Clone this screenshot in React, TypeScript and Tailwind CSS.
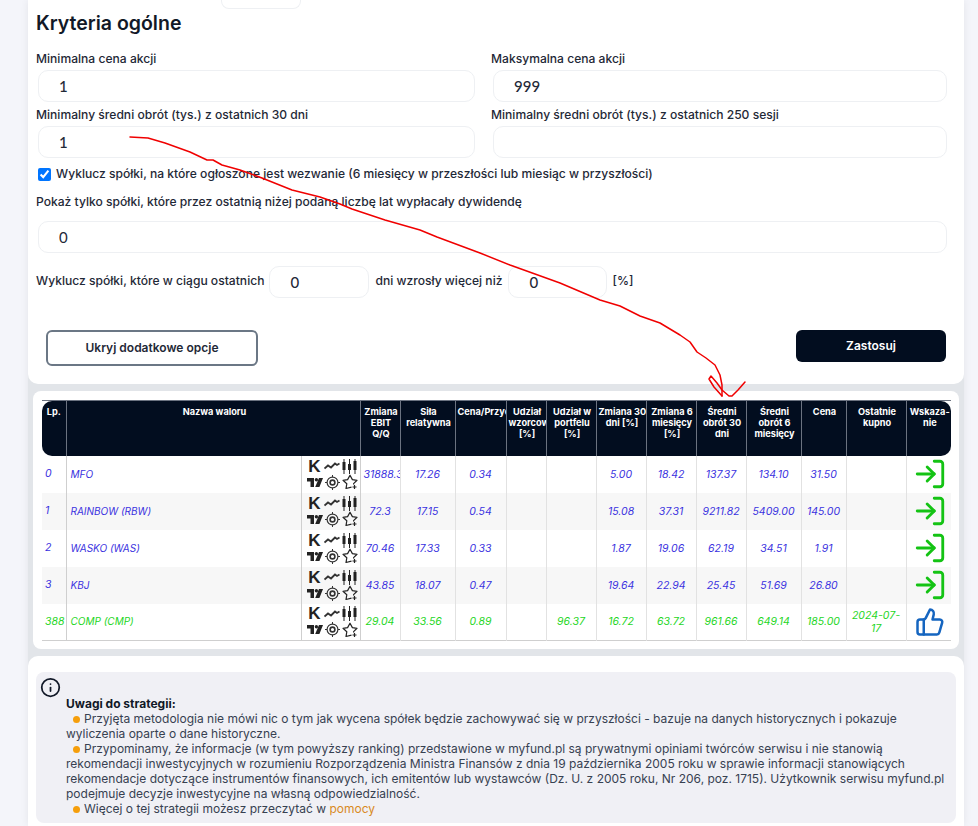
import { Info, LogIn, ThumbsUp } from 'lucide-react';

const headers = [
  'Zmiana EBIT Q/Q',
  'Siła relatywna',
  'Cena/Przychody',
  'Udział wzorcowym [%]',
  'Udział w portfelu [%]',
  'Zmiana\u00a030 dni\u00a0[%]',
  'Zmiana 6 miesięcy [%]',
  'Średni obrót 30 dni',
  'Średni obrót 6 miesięcy',
  'Cena',
  'Ostatnie kupno',
];

const rows = [
  { lp: '0', name: 'MFO', values: ['31888.3', '17.26', '0.34', '', '', '5.00', '18.42', '137.37', '134.10', '31.50', ''] },
  { lp: '1', name: 'RAINBOW (RBW)', values: ['72.3', '17.15', '0.54', '', '', '15.08', '37.31', '9211.82', '5409.00', '145.00', ''] },
  { lp: '2', name: 'WASKO (WAS)', values: ['70.46', '17.33', '0.33', '', '', '1.87', '19.06', '62.19', '34.51', '1.91', ''] },
  { lp: '3', name: 'KBJ', values: ['43.85', '18.07', '0.47', '', '', '19.64', '22.94', '25.45', '51.69', '26.80', ''] },
  { lp: '388', name: 'COMP (CMP)', values: ['29.04', '33.56', '0.89', '', '96.37', '16.72', '63.72', '961.66', '649.14', '185.00', '2024-07-17'], owned: true },
];

function NumberField({ value, className }: { value?: string; className: string }) {
  return (
    <input
      type="text"
      defaultValue={value}
      className={`h-8 rounded-[10px] border border-[#eef0f3] bg-white pl-5 font-['Lato',sans-serif] text-[15px] text-[#1f2937] outline-none ${className}`}
    />
  );
}

function ToolIcons() {
  return (
    <div className="flex flex-col items-center gap-px pl-[3px] not-italic">
      <div className="flex h-[15px] items-center gap-[2px]">
        <span className="w-[14px] text-center font-['Liberation_Sans',sans-serif] text-[17px] leading-none font-bold text-[#222]">K</span>
        <svg width="16" height="10" viewBox="0 0 16 10" fill="none" stroke="#333" strokeWidth="1.8">
          <path d="M0.5 7.5 L4 4.5 L7 6.5 L11 2.5 L13 4 L15.5 2.5" />
        </svg>
        <svg width="15" height="15" viewBox="0 0 15 15" fill="#222">
          <rect x="0.5" y="3" width="3" height="8" />
          <rect x="1.5" y="0" width="1" height="15" />
          <rect x="6" y="5" width="3" height="6" />
          <rect x="7" y="0" width="1" height="15" />
          <rect x="11.5" y="2" width="3" height="9" />
          <rect x="12.5" y="0" width="1" height="15" />
        </svg>
      </div>
      <div className="flex h-[15px] items-center gap-[2px]">
        <svg width="16" height="9" viewBox="0 0 16 9" fill="#222">
          <path d="M0 0h7v9H3.5V3.5H0z" />
          <circle cx="9.4" cy="1.7" r="1.7" />
          <path d="M12 0h4l-3.6 9H8.2z" />
        </svg>
        <svg width="15" height="15" viewBox="0 0 15 15" fill="none" stroke="#333">
          <circle cx="7.5" cy="7.5" r="5.4" strokeWidth="1.2" />
          <circle cx="7.5" cy="7.5" r="2.4" strokeWidth="1.6" />
          <path d="M7.5 0v2M7.5 13v2M0 7.5h2M13 7.5h2" strokeWidth="1" />
        </svg>
        <svg width="16" height="16" viewBox="0 0 16 16" fill="none" stroke="#222" strokeWidth="1.2">
          <path d="M9.5 13.2 L4 14.5 L4.8 9.8 L1 6.3 L5.6 5.6 L8 1.2 L10.4 5.6 L15 6.3 L11.6 9.6 L11.8 10.5" strokeLinejoin="round" />
          <path d="M12.5 11v4M10.5 13h4" strokeWidth="1.2" />
        </svg>
      </div>
    </div>
  );
}

export default function App() {
  return (
    <div className="relative h-[826px] overflow-hidden bg-[#f4f5fa] font-['Inter',sans-serif] text-[#1f2937]">
      <div className="mr-[14px] ml-[28px] bg-[#e2e5e9] shadow-[0_0_8px_rgba(0,0,0,0.07)]">
        {/* Kryteria ogólne */}
        <section className="h-[384px] rounded-b-[10px] bg-white pr-[17px] pl-2">
          <div className="ml-[185px] h-[9px] w-[80px] rounded-b-[8px] border border-t-0 border-[#eef0f3]" />
          <h2 className="mt-[2px] h-[24px] text-[19.5px] leading-[24px] font-semibold text-[#111827]">Kryteria ogólne</h2>
          <div className="mt-[17px] grid grid-cols-[439px_456px] gap-x-4 gap-y-[6px] text-[12.1px] font-medium">
            <div className="flex flex-col gap-[4px]">
              <label className="h-[14px] leading-[14px]">Minimalna cena akcji</label>
              <NumberField value="1" className="ml-0.5 w-[437px]" />
            </div>
            <div className="flex flex-col gap-[4px]">
              <label className="h-[14px] leading-[14px]">Maksymalna cena akcji</label>
              <NumberField value="999" className="ml-0.5 w-[454px]" />
            </div>
            <div className="flex flex-col gap-[4px]">
              <label className="h-[14px] leading-[14px]">Minimalny średni obrót (tys.) z ostatnich 30 dni</label>
              <NumberField value="1" className="ml-0.5 w-[437px]" />
            </div>
            <div className="flex flex-col gap-[4px]">
              <label className="h-[14px] leading-[14px]">Minimalny średni obrót (tys.) z ostatnich 250 sesji</label>
              <NumberField className="ml-0.5 w-[454px]" />
            </div>
          </div>
          <div className="mt-[8px] ml-0.5 flex h-[16px] items-center gap-[5px] text-[12.1px] font-medium">
            <input type="checkbox" defaultChecked className="h-[13px] w-[13px] accent-[#0075ff]" />
            <span>Wyklucz spółki, na które ogłoszone jest wezwanie (6 miesięcy w przeszłości lub miesiąc w przyszłości)</span>
          </div>
          <p className="mt-[13px] h-[14px] text-[12.1px] leading-[14px] font-medium">
            Pokaż tylko spółki, które przez ostatnią niżej podaną liczbę lat wypłacały dywidendę
          </p>
          <NumberField value="0" className="mt-[12px] ml-0.5 block w-[909px]" />
          <div className="mt-[13px] flex h-[32px] items-center text-[12.1px] font-medium">
            <span className="-mt-[2px]">Wyklucz spółki, które w ciągu ostatnich</span>
            <NumberField value="0" className="ml-[5px] w-[100px]" />
            <span className="-mt-[2px] ml-[6px]">dni wzrosły więcej niż</span>
            <NumberField value="0" className="ml-[6px] w-[99px]" />
            <span className="-mt-[2px] ml-[5px]">[%]</span>
          </div>
          <div className="mt-[32px] flex items-start justify-between pr-px pl-[10px]">
            <button className="h-[36px] w-[212px] rounded-[6px] border-2 border-[#6b7785] bg-white text-[12px] font-semibold text-[#1f2937]">
              Ukryj dodatkowe opcje
            </button>
            <button className="h-[32px] w-[150px] rounded-[6px] bg-[#020d1f] text-[12px] font-semibold text-white">Zastosuj</button>
          </div>
        </section>

        {/* Ranking */}
        <div className="pt-[7px] pb-[7px]">
          <section className="mr-[5px] ml-[5px] h-[258px] rounded-[8px] bg-white px-[9px] pt-[9px]">
            <table className="w-[909px] table-fixed border-collapse">
              <colgroup>
                <col className="w-[24px]" />
                <col className="w-[235px]" />
                <col className="w-[59px]" />
                <col className="w-[40px]" />
                <col className="w-[55px]" />
                <col className="w-[51px]" />
                <col className="w-[40px]" />
                <col className="w-[50px]" />
                <col className="w-[50px]" />
                <col className="w-[50px]" />
                <col className="w-[50px]" />
                <col className="w-[55px]" />
                <col className="w-[45px]" />
                <col className="w-[60px]" />
                <col className="w-[45px]" />
              </colgroup>
              <thead>
                <tr className="h-[55px] text-[9.2px] leading-[11px] font-bold text-white">
                  <th className="overflow-hidden rounded-tl-[10px] rounded-bl-[10px] border-t border-r border-[#6b7280] bg-[#020d1f] pt-[5px] align-top font-bold">Lp.</th>
                  <th colSpan={2} className="overflow-hidden border-t border-r border-[#6b7280] bg-[#020d1f] pt-[5px] pl-[3px] align-top font-bold">Nazwa waloru</th>
                  {headers.map((h) => (
                    <th key={h} className="overflow-hidden border-t border-r border-[#6b7280] bg-[#020d1f] pt-[5px] pl-[2px] align-top font-bold">
                      {h}
                    </th>
                  ))}
                  <th className="overflow-hidden rounded-tr-[10px] rounded-br-[10px] border-t border-[#6b7280] bg-[#020d1f] pt-[5px] pl-[2px] align-top font-bold">
                    Wskaza-nie
                  </th>
                </tr>
              </thead>
              <tbody>
                {rows.map((row, i) => (
                  <tr
                    key={row.lp}
                    className={`h-[37px] text-[10.5px] italic ${i % 2 === 1 ? 'bg-[#f7f7f7]' : 'bg-white'} ${row.owned ? 'text-[#1ed61e]' : 'text-[#3a32e0]'}`}
                  >
                    <td className="overflow-hidden border-r border-[#cfcfcf] pl-[3px]">{row.lp}</td>
                    <td className="overflow-hidden border-r border-[#cfcfcf] pl-[4px] text-[10px]">{row.name}</td>
                    <td className="border-r border-[#cfcfcf] p-0">
                      <ToolIcons />
                    </td>
                    {row.values.map((v, j) => (
                      <td key={j} className="overflow-hidden border-r border-[#e2e2e2] px-[3px] text-center leading-[13px]">
                        {v}
                      </td>
                    ))}
                    <td className="p-0 text-center">
                      <div className="flex justify-center pl-[3px]">
                        {row.owned ? (
                          <ThumbsUp size={30} strokeWidth={2} className="text-[#1565c0]" />
                        ) : (
                          <LogIn size={34} strokeWidth={2} className="text-[#14c314]" />
                        )}
                      </div>
                    </td>
                  </tr>
                ))}
              </tbody>
              <tfoot>
                <tr>
                  <td colSpan={15} className="h-0 border-t border-[#cfcfcf] p-0" />
                </tr>
              </tfoot>
            </table>
          </section>
        </div>

        {/* Uwagi */}
        <section className="h-[170px] rounded-t-[10px] bg-white px-2 pt-[16px]">
          <div className="h-[151px] w-[920px] rounded-[8px] bg-[#f0f0f5] pt-[5px] pl-[4px]">
            <Info size={21} strokeWidth={2} className="text-[#111827]" />
            <div className="-mt-[2px] pr-[8px] pl-[26px] text-[12px] leading-[15px] text-[#374151]">
              <p className="font-bold text-[#111827]">Uwagi do strategii:</p>
              <p>
                <span className="mr-[4px] ml-[7px] inline-block h-[7px] w-[7px] rounded-full bg-[#f59e0b]" />
                Przyjęta metodologia nie mówi nic o tym jak wycena spółek będzie zachowywać się w przyszłości - bazuje na danych historycznych i pokazuje wyliczenia oparte o dane historyczne.
              </p>
              <p>
                <span className="mr-[4px] ml-[7px] inline-block h-[7px] w-[7px] rounded-full bg-[#f59e0b]" />
                Przypominamy, że informacje (w tym powyższy ranking) przedstawione w myfund.pl są prywatnymi opiniami twórców serwisu i nie stanowią rekomendacji inwestycyjnych w rozumieniu Rozporządzenia Ministra Finansów z dnia 19 października 2005 roku w sprawie informacji stanowiących rekomendacje dotyczące instrumentów finansowych, ich emitentów lub wystawców (Dz. U. z 2005 roku, Nr 206, poz. 1715). Użytkownik serwisu myfund.pl podejmuje decyzje inwestycyjne na własną odpowiedzialność.
              </p>
              <p>
                <span className="mr-[4px] ml-[7px] inline-block h-[7px] w-[7px] rounded-full bg-[#f59e0b]" />
                Więcej o tej strategii możesz przeczytać w <span className="text-[#d98a1f]">pomocy</span>
              </p>
            </div>
          </div>
        </section>
      </div>

      {/* Czerwona adnotacja */}
      <svg className="pointer-events-none absolute top-0 left-0" width="978" height="826" fill="none" stroke="#f00000" strokeWidth="1.5" strokeLinejoin="round" strokeLinecap="round">
        <path d="M130 137 L148 138 L165 143 L190 152 L207 160 L213 160 L222 165 L240 170 L262 178 L292 190 L320 197 L340 204 L352 209 L385 220 L420 230 L437 237 L480 253 L510 265 L560 283 L600 300 L620 306 L640 316 L660 323 L680 335 L690 342 L697 352 L706 358 L715 365 L720 375 L722 385 L722 396" />
        <path d="M722 396 L714 387 L709 379 L711 376 L717 383 L722 390 L729 396 L732 396 L738 390 L745 382" />
      </svg>
    </div>
  );
}
